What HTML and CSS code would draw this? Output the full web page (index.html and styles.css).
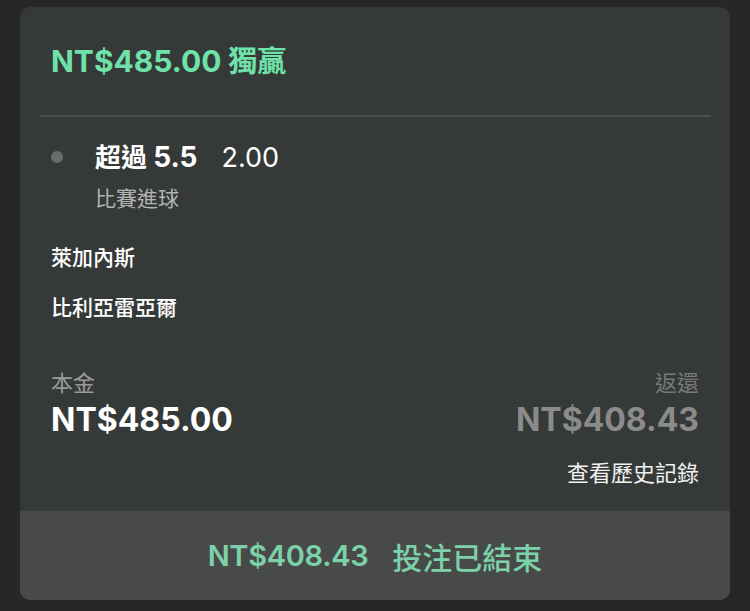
FILE: index.html
```html
<!DOCTYPE html>
<html lang="zh-Hant">
<head>
<meta charset="utf-8">
<link rel="stylesheet" href="styles.css">
</head>
<body>
<div class="card">
  <div class="header">
    <div class="title"><span class="num">NT$485.00</span> 獨贏</div>
  </div>
  <div class="divider"></div>
  <div class="selection">
    <span class="dot"></span>
    <div class="sel-body">
      <div class="sel-line"><span class="pick">超過 <span class="num">5.5</span></span><span class="odds">2.00</span></div>
      <div class="market">比賽進球</div>
    </div>
  </div>
  <div class="team team-home">萊加內斯</div>
  <div class="team team-away">比利亞雷亞爾</div>
  <div class="amounts">
    <div class="amt">
      <div class="amt-label">本金</div>
      <div class="amt-value">NT$485.00</div>
    </div>
    <div class="amt amt-right">
      <div class="amt-label muted">返還</div>
      <div class="amt-value muted">NT$408.43</div>
    </div>
  </div>
  <div class="history-row"><span class="history">查看歷史記錄</span></div>
  <div class="footer">
    <span class="footer-amt">NT$408.43</span><span class="footer-status">投注已結束</span>
  </div>
</div>
</body>
</html>
```
FILE: styles.css
```css
html, body {
  margin: 0;
  padding: 0;
  background: #272727;
}
body {
  width: 750px;
  height: 611px;
  overflow: hidden;
  font-family: Inter, "Noto Sans CJK TC", sans-serif;
  color: #ffffff;
}
.card {
  margin: 7px 20px 0 20px;
  width: 710px;
  height: 593px;
  background: #353a39;
  border-radius: 10px;
  overflow: hidden;
  display: flex;
  flex-direction: column;
}
.header {
  height: 108px;
  display: flex;
  align-items: center;
  padding-left: 31px;
}
.title {
  font-size: 29px;
  font-weight: 700;
  color: #6fe2a9;
  line-height: 1;
}
.title .num {
  font-size: 30px;
}
.divider {
  height: 2px;
  background: #4b504f;
  margin: 0 19px 0 20px;
}
.selection {
  display: flex;
  align-items: flex-start;
  padding-left: 31px;
  margin-top: 23px;
}
.dot {
  width: 12px;
  height: 12px;
  border-radius: 50%;
  background: #6b6d6d;
  margin-top: 11px;
  flex-shrink: 0;
}
.sel-body {
  margin-left: 32px;
}
.sel-line {
  display: flex;
  align-items: baseline;
  line-height: 34px;
  height: 34px;
}
.pick {
  font-size: 26px;
  font-weight: 700;
}
.pick .num {
  font-size: 28px;
}
.odds {
  font-size: 27px;
  font-weight: 400;
  margin-left: 24px;
}
.market {
  font-size: 21px;
  color: #b4b4b4;
  line-height: 30px;
  margin-top: 10px;
}
.team {
  padding-left: 31px;
  font-size: 21px;
  font-weight: 500;
  line-height: 30px;
}
.team-home {
  margin-top: 29px;
}
.team-away {
  margin-top: 20px;
}
.amounts {
  display: flex;
  justify-content: space-between;
  padding: 0 31px 0 31px;
  margin-top: 45px;
}
.amt-right {
  text-align: right;
}
.amt-label {
  font-size: 22px;
  color: #9c9c9c;
  line-height: 30px;
}
.amt-label.muted {
  color: #7a7a7a;
}
.amt-value {
  font-size: 32px;
  font-weight: 700;
  line-height: 40px;
  margin-top: 2px;
}
.amt-value.muted {
  color: #8b8b8b;
}
.history-row {
  display: flex;
  justify-content: flex-end;
  padding-right: 31px;
  margin-top: 18px;
}
.history {
  font-size: 22px;
  line-height: 30px;
  color: #f2f2f2;
}
.footer {
  margin-top: auto;
  height: 89px;
  background: #484a49;
  display: flex;
  align-items: center;
  justify-content: center;
  color: #7dd1a9;
  font-weight: 600;
}
.footer-amt {
  font-size: 29px;
  letter-spacing: -0.3px;
}
.footer-status {
  font-size: 30px;
  margin-left: 24px;
  font-weight: 500;
}
```
